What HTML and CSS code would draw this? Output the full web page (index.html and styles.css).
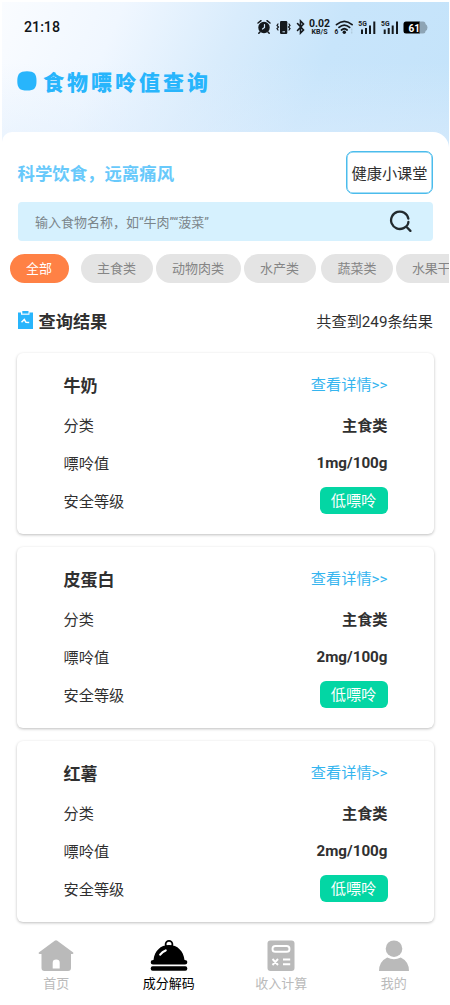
FILE: index.html
```html
<!DOCTYPE html>
<html lang="zh-CN">
<head>
<meta charset="utf-8">
<title>食物嘌呤值查询</title>
<link rel="stylesheet" href="styles.css">
</head>
<body>
<div class="app">
  <header class="hero">
    <div class="status">
      <span class="time">21:18</span>
      <svg class="status-icons" viewBox="0 0 174 20" width="174" height="20">
        <g fill="none" stroke="#15191d" stroke-width="1.5" stroke-linecap="round">
          <circle cx="8" cy="10.500" r="5" fill="#15191d"/>
          <path d="M2 6 5 3.700M14 6l-3-2.300M4 15l-1.200 1.300M12 15l1.200 1.300"/>
          <path d="M8.500 7.500v3l-2 1.500" stroke="#cfe7fa" stroke-width="1.200"/>
          <path d="M22 7l-1 1.500 1.500 1.500-1.500 1.500 1 1.500M33 7l1 1.500-1.500 1.500 1.500 1.500-1 1.500" stroke-width="1.200"/>
          <path d="M41.500 6.500l6 6.500-3 3V4l3 3-6 6.500" stroke-width="1.600"/>
          <path d="M80.500 7.700q7.800-6.700 15.600 0M83 10.400q5.300-4.700 10.600 0M85.500 13q2.800-2.500 5.600 0" stroke-width="1.700"/>
        </g>
        <rect x="24" y="4" width="7.300" height="13" rx="1.200" fill="#15191d"/>
        <path d="M26.500 14.800h2.500" stroke="#cfe7fa"/>
        <circle cx="88.300" cy="15.300" r="1.700" fill="#15191d"/>
        <path d="M95.800 11.500v5" stroke="#a9c1d2" stroke-dasharray="2 1"/>
        <text x="53" y="10.300" class="speed" textLength="21" lengthAdjust="spacingAndGlyphs">0.02</text>
        <text x="55.500" y="17.200" class="unit" textLength="16" lengthAdjust="spacingAndGlyphs">KB/S</text>
        <text x="78.500" y="17.300" class="unit">6</text>
        <g id="signal">
          <text x="102.300" y="9.300" class="net" textLength="8.500" lengthAdjust="spacingAndGlyphs">5G</text>
          <path d="M106 12.500v4.500M110 11v6M114 8.500v8.500M118.300 4.500v12.500" stroke="#15191d" stroke-width="2"/>
        </g>
        <use href="#signal" x="22.700"/>
        <path d="M150 4.500h14v12h-14q-2.500 0-2.500-2.500v-7q0-2.500 2.500-2.500z" fill="#000"/>
        <path d="M163.500 4.500h3.500q2.500 0 2.500 2.500 2 1 2 3.500t-2 3.500q0 2.500-2.500 2.500h-3.500z" fill="#8da4b5"/>
        <text x="152.500" y="14.700" class="battery" textLength="11.500" lengthAdjust="spacingAndGlyphs">61</text>
      </svg>
    </div>
    <h1 class="title"><svg class="title-mark" viewBox="0 0 20 20" width="20" height="20"><path d="M10 .2C17.300.2 19.500 3 19.500 10s-2.200 9.600-9.500 9.600S.3 17 .3 10 2.700.2 10 .2z" fill="#28b5fc"/></svg>食物嘌呤值查询</h1>
  </header>
  <main class="sheet">
    <div class="intro">
      <p class="slogan">科学饮食，远离痛风</p>
      <button class="lesson">健康小课堂</button>
    </div>
    <div class="search">
      <span>输入食物名称，如“牛肉”“菠菜”</span>
      <svg viewBox="0 0 24 24" width="24" height="24" fill="none" stroke="#222a2e" stroke-width="2.300" stroke-linecap="round"><path d="M19.300 8.500A8.700 8.700 0 1 0 14.600 18.100Q19.200 16 19.400 12M17.400 16.700l4 4.200"/></svg>
    </div>
    <nav class="filters">
      <span class="pill active">全部</span>
      <span class="pill main-food">主食类</span>
      <span class="pill meat">动物肉类</span>
      <span class="pill aquatic">水产类</span>
      <span class="pill vegetable">蔬菜类</span>
      <span class="pill fruit">水果干</span>
    </nav>
    <div class="results-head">
      <h2><svg viewBox="0 0 15 18" width="15" height="18"><path d="M0 1.500h3v2.300h8.500V1.500H15V18H0z" fill="#28b5fc"/><path d="M4.300 0h6.200v2.600H4.300z" fill="#28b5fc"/><path d="M3.500 11.300l2.800-2.800 1.700 2.800 3.200.2" fill="none" stroke="#fff" stroke-width="1.500"/></svg>查询结果</h2>
      <span>共查到249条结果</span>
    </div>
    <section class="cards">
      <article class="card">
        <div class="row top"><h3>牛奶</h3><a>查看详情&gt;&gt;</a></div>
        <div class="row"><span>分类</span><b>主食类</b></div>
        <div class="row"><span>嘌呤值</span><b class="amount">1mg/100g</b></div>
        <div class="row"><span>安全等级</span><span class="level">低嘌呤</span></div>
      </article>
      <article class="card">
        <div class="row top"><h3>皮蛋白</h3><a>查看详情&gt;&gt;</a></div>
        <div class="row"><span>分类</span><b>主食类</b></div>
        <div class="row"><span>嘌呤值</span><b class="amount">2mg/100g</b></div>
        <div class="row"><span>安全等级</span><span class="level">低嘌呤</span></div>
      </article>
      <article class="card">
        <div class="row top"><h3>红薯</h3><a>查看详情&gt;&gt;</a></div>
        <div class="row"><span>分类</span><b>主食类</b></div>
        <div class="row"><span>嘌呤值</span><b class="amount">2mg/100g</b></div>
        <div class="row"><span>安全等级</span><span class="level">低嘌呤</span></div>
      </article>
    </section>
  </main>
  <footer class="tabs">
    <div class="tab">
      <svg viewBox="0 0 38 32" width="38" height="32"><path d="M17.700.7q1.300-1 2.600 0L36.200 12.500q.7 1.500-1 1.500H34v14q0 3-3 3H7.500q-3 0-3-3V14H2.800q-1.700 0-1-1.500z" fill="#bababa"/><path d="M15.700 28.500v-5.700q0-3.300 3.500-3.300t3.500 3.300v5.700z" fill="#fff"/></svg>
      <span>首页</span>
    </div>
    <div class="tab current">
      <svg viewBox="0 0 38 32" width="38" height="32"><circle cx="19" cy="4.300" r="3.400" fill="none" stroke="#000" stroke-width="1.800"/><path d="M3.500 20C4.500 11 10.500 5 19 5s14.500 6 15.500 15q2.800 0 2.800 2.200T35 24.500H3Q.7 24.500.7 22.200T3.500 20z"/><rect x=".7" y="26.300" width="36.600" height="4.500" rx="2"/><path d="M10.200 14.700q2.200-3 5.500-4.200" fill="none" stroke="#fff" stroke-width="2.200" stroke-linecap="round"/></svg>
      <span>成分解码</span>
    </div>
    <div class="tab">
      <svg viewBox="0 0 38 32" width="38" height="32"><rect x="5.500" y=".5" width="27" height="30.500" rx="3" fill="#bababa"/><g fill="none" stroke="#fff" stroke-width="1.900"><rect x="10.500" y="6" width="17" height="5.800" rx="2.900"/><path d="M10.500 19l5.500 6M16 19l-5.500 6M21 19.500h7.200M21 24.200h7.200"/></g></svg>
      <span>收入计算</span>
    </div>
    <div class="tab">
      <svg viewBox="0 0 38 32" width="38" height="32" fill="#bababa"><circle cx="19" cy="8.700" r="8.300"/><path d="M4 31q0-9.500 8.200-13.500 6.800 3.600 13.600 0Q34 21.500 34 31z"/></svg>
      <span>我的</span>
    </div>
  </footer>
</div>
</body>
</html>
```
FILE: styles.css
```css
* { box-sizing: border-box; }
body {
  margin: 0;
  background: #fff;
  color: #303030;
  font-family: Roboto, "Noto Sans CJK SC", sans-serif;
}
h1, h2, h3, p { margin: 0; }
.app {
  width: 450px;
  height: 1005px;
  padding: 2px 1px 0 2px;
  display: flex;
  flex-direction: column;
  overflow: hidden;
}
.hero {
  height: 150px;
  flex: none;
  background:
    linear-gradient(0deg, rgba(224, 238, 253, .55), rgba(224, 238, 253, 0) 60%),
    linear-gradient(114deg, #fafcff 0%, #f0f7ff 24%, #d9ecfc 47%, #c8e5fb 68%, #c4e3fa 100%);
}
.status {
  height: 50px;
  padding: 0 19px 0 22px;
  display: flex;
  align-items: center;
  justify-content: space-between;
}
.time { font-size: 14.2px; font-weight: 500; color: #101418; }
.status-icons { margin-top: -1px; font-weight: 700; fill: #15191d; }
.speed { font-size: 10px; }
.unit { font-size: 6.5px; }
.net { font-size: 7px; }
.battery { font-size: 11px; fill: #fff; }
.title {
  display: flex;
  align-items: center;
  height: 57px;
  padding-left: 15px;
  font-size: 21px;
  font-weight: 900;
  letter-spacing: 3px;
  color: #28b5fc;
}
.title-mark { margin-right: 6px; }
.sheet {
  margin-top: -20px;
  border-radius: 10px 16px 0 0;
  background: #fff;
  height: 795px;
  flex: none;
}
.intro {
  display: flex;
  justify-content: space-between;
  align-items: center;
  padding: 19px 16px 0 15.5px;
}
.slogan { font-size: 17.4px; font-weight: 700; color: #68c9fb; }
.lesson {
  width: 87px;
  height: 43px;
  padding: 0 0 1px;
  border: 1px solid #4bbcec;
  box-shadow: inset 0 0 0 .5px #4bbcec;
  border-radius: 7px;
  background: #fff;
  color: #303030;
  font: 15.2px Roboto, "Noto Sans CJK SC", sans-serif;
}
.search {
  margin: 8px 16px 0 15.5px;
  height: 39px;
  padding: 0 20px 0 17.5px;
  border-radius: 4px;
  background: #d6f1fe;
  display: flex;
  align-items: center;
  justify-content: space-between;
  font-size: 13px;
  color: #7b858a;
}
.filters {
  display: flex;
  height: 29px;
  margin: 13px 0 0 7.5px;
  overflow: hidden;
}
.pill {
  flex: none;
  width: 72px;
  margin-right: 3px;
  border-radius: 15px;
  background: #e4e4e4;
  color: #858585;
  font-size: 13px;
  line-height: 29px;
  text-align: center;
}
.active { width: 59px; margin-right: 12px; background: #ff8145; color: #fff; }
.meat { width: 85px; }
.aquatic { margin-right: 5.5px; }
.fruit {
  width: 54px;
  margin-right: 0;
  padding-left: 16px;
  border-radius: 15px 0 0 15px;
  text-align: left;
  white-space: nowrap;
  letter-spacing: -.2px;
}
.results-head {
  display: flex;
  align-items: center;
  justify-content: space-between;
  height: 40px;
  margin: 17px 16px 13px 15.5px;
  font-size: 15.2px;
}
.results-head h2 { display: flex; align-items: center; gap: 6px; font-size: 17.2px; }
.results-head h2 svg { margin-top: -1px; }
.cards { display: flex; flex-direction: column; gap: 13px; padding: 0 15.5px 0 15px; }
.card {
  height: 181px;
  padding: 12px 46px 14px 46.5px;
  border-radius: 6px;
  background: #fff;
  box-shadow: 0 1px 3px rgba(0, 0, 0, .26);
}
.row {
  height: 38px;
  display: flex;
  align-items: center;
  justify-content: space-between;
  font-size: 15.2px;
}
.top { height: 40px; padding-bottom: 2px; }
.top h3 { font-size: 17px; }
.top a { color: #35b5ef; margin-top: -2px; }
.row b { font-weight: 700; }
.row .amount { padding-top: 2px; }
.level {
  width: 68px;
  height: 27px;
  border-radius: 6px;
  background: #03d6a4;
  color: #fff;
  line-height: 29px;
  text-align: center;
}
.tabs { display: grid; grid-template-columns: repeat(4, 1fr); padding: 13px 0 0; margin: 0 -1px 0 -2px; }
.tab {
  display: flex;
  flex-direction: column;
  align-items: center;
  font-size: 13px;
  line-height: 23px;
  color: #bababa;
}
.current { color: #000; }
```
